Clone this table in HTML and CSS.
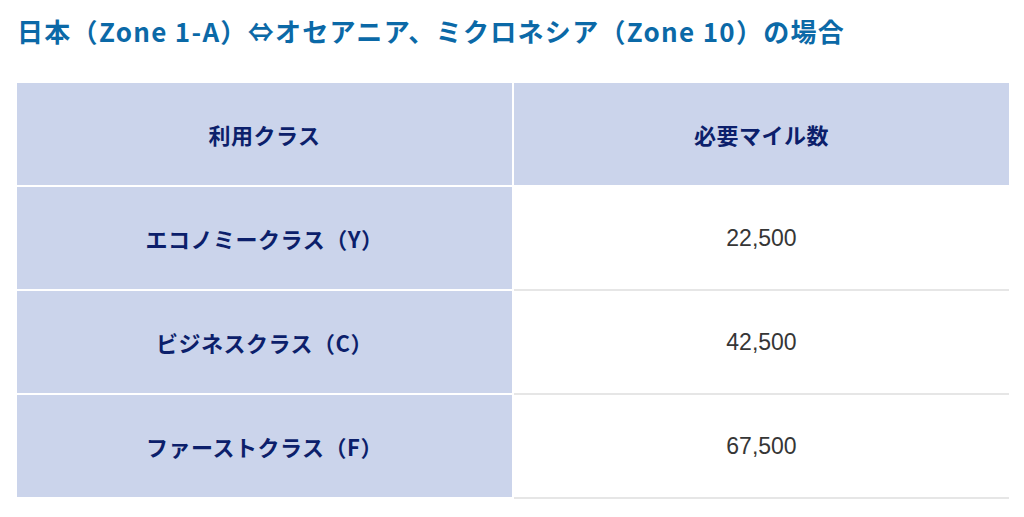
FILE: index.html
```html
<!DOCTYPE html>
<html lang="ja">
<head>
<meta charset="utf-8">
<link rel="stylesheet" href="styles.css">
</head>
<body>
<h2 class="title">日本（Zone 1-A）⇔オセアニア、ミクロネシア（Zone 10）の場合</h2>
<table class="miles">
  <thead>
    <tr><th class="cls">利用クラス</th><th class="cls">必要マイル数</th></tr>
  </thead>
  <tbody>
    <tr><th class="cls">エコノミークラス（Y）</th><td class="num">22,500</td></tr>
    <tr><th class="cls">ビジネスクラス（C）</th><td class="num">42,500</td></tr>
    <tr><th class="cls">ファーストクラス（F）</th><td class="num">67,500</td></tr>
  </tbody>
</table>
</body>
</html>
```
FILE: styles.css
```css
html, body {
  margin: 0;
  padding: 0;
  background: #ffffff;
}
body {
  padding: 0 15px 0 17px;
  font-family: "Noto Sans CJK JP", "Noto Sans", sans-serif;
}
.title {
  margin: 0;
  padding-top: 13px;
  height: 83px;
  box-sizing: border-box;
  font-size: 26px;
  line-height: 36px;
  font-weight: 700;
  letter-spacing: 1.3px;
  color: #0b69a7;
  white-space: nowrap;
}
.miles {
  width: 992px;
  border-collapse: separate;
  border-spacing: 0;
  table-layout: fixed;
}
.cls, .num {
  width: 50%;
  height: 102px;
  padding: 0;
  text-align: center;
  vertical-align: middle;
  border-bottom: 2px solid #ffffff;
}
.cls {
  background: #cbd4eb;
  color: #0c1f6b;
  font-size: 22px;
  font-weight: 700;
  letter-spacing: 0.5px;
  border-right: 2px solid #ffffff;
}
.num {
  background: #ffffff;
  color: #363636;
  font-family: "Liberation Sans", Arial, sans-serif;
  font-size: 23px;
  border-bottom-color: #e6e6e6;
}
thead .cls + .cls {
  border-right: 0;
}
```
